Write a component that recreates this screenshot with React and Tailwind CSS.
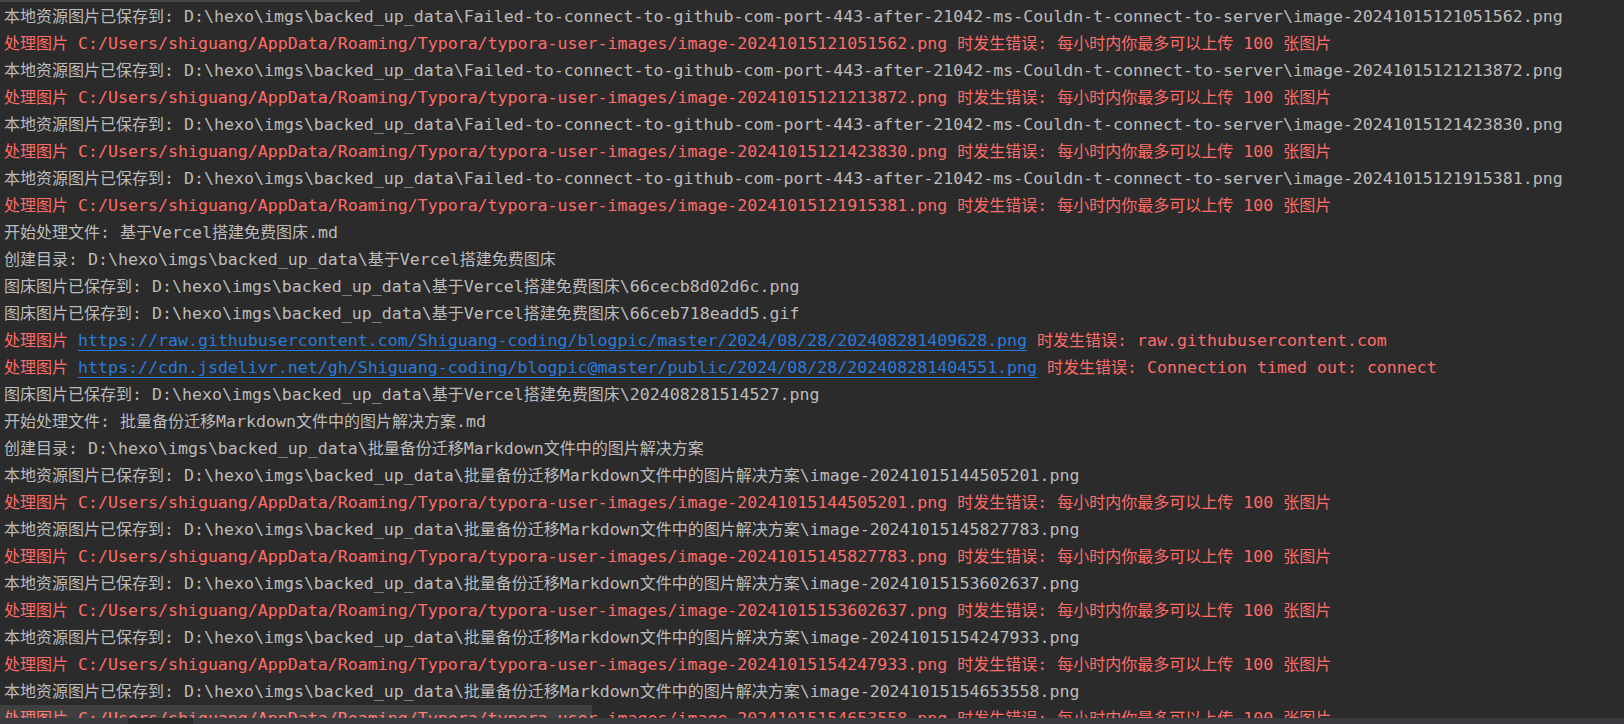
import React from "react";

const G = "gray";
const R = "red";
const L = "link";

const LOCAL_DIR_A = "Failed-to-connect-to-github-com-port-443-after-21042-ms-Couldn-t-connect-to-server";
const LOCAL_DIR_B = "批量备份迁移Markdown文件中的图片解决方案";

const savedLocal = (dir, id) => [
  [G, `本地资源图片已保存到: D:\\hexo\\imgs\\backed_up_data\\${dir}\\image-${id}.png`],
];
const uploadFail = (id) => [
  [R, `处理图片 C:/Users/shiguang/AppData/Roaming/Typora/typora-user-images/image-${id}.png 时发生错误: 每小时内你最多可以上传 100 张图片`],
];

const lines = [
  savedLocal(LOCAL_DIR_A, "20241015121051562"),
  uploadFail("20241015121051562"),
  savedLocal(LOCAL_DIR_A, "20241015121213872"),
  uploadFail("20241015121213872"),
  savedLocal(LOCAL_DIR_A, "20241015121423830"),
  uploadFail("20241015121423830"),
  savedLocal(LOCAL_DIR_A, "20241015121915381"),
  uploadFail("20241015121915381"),
  [[G, "开始处理文件: 基于Vercel搭建免费图床.md"]],
  [[G, "创建目录: D:\\hexo\\imgs\\backed_up_data\\基于Vercel搭建免费图床"]],
  [[G, "图床图片已保存到: D:\\hexo\\imgs\\backed_up_data\\基于Vercel搭建免费图床\\66cecb8d02d6c.png"]],
  [[G, "图床图片已保存到: D:\\hexo\\imgs\\backed_up_data\\基于Vercel搭建免费图床\\66ceb718eadd5.gif"]],
  [
    [R, "处理图片 "],
    [L, "https://raw.githubusercontent.com/Shiguang-coding/blogpic/master/2024/08/28/202408281409628.png"],
    [R, " 时发生错误: raw.githubusercontent.com"],
  ],
  [
    [R, "处理图片 "],
    [L, "https://cdn.jsdelivr.net/gh/Shiguang-coding/blogpic@master/public/2024/08/28/202408281404551.png"],
    [R, " 时发生错误: Connection timed out: connect"],
  ],
  [[G, "图床图片已保存到: D:\\hexo\\imgs\\backed_up_data\\基于Vercel搭建免费图床\\202408281514527.png"]],
  [[G, "开始处理文件: 批量备份迁移Markdown文件中的图片解决方案.md"]],
  [[G, "创建目录: D:\\hexo\\imgs\\backed_up_data\\批量备份迁移Markdown文件中的图片解决方案"]],
  savedLocal(LOCAL_DIR_B, "20241015144505201"),
  uploadFail("20241015144505201"),
  savedLocal(LOCAL_DIR_B, "20241015145827783"),
  uploadFail("20241015145827783"),
  savedLocal(LOCAL_DIR_B, "20241015153602637"),
  uploadFail("20241015153602637"),
  savedLocal(LOCAL_DIR_B, "20241015154247933"),
  uploadFail("20241015154247933"),
  savedLocal(LOCAL_DIR_B, "20241015154653558"),
  uploadFail("20241015154653558"),
];

const colorClass = {
  gray: "text-[#bbbbbb]",
  red: "text-[#ff6b68]",
  link: "text-[#287bde] underline decoration-[#287bde] underline-offset-[4px]",
};

function Mixed({ text }) {
  const parts = text.split(/([\u3000-\u9fff\uff00-\uffef]+)/);
  return parts.map((p, i) =>
    /[\u3000-\u9fff\uff00-\uffef]/.test(p) ? (
      <span key={i} className="text-[16px] font-['Noto_Sans_CJK_SC',sans-serif]">
        {p}
      </span>
    ) : (
      <React.Fragment key={i}>{p}</React.Fragment>
    )
  );
}

function ConsoleLine({ segments }) {
  return (
    <div className="h-[27px] whitespace-pre leading-[27px]">
      {segments.map(([c, t], i) => (
        <span key={i} className={colorClass[c]}>
          <Mixed text={t} />
        </span>
      ))}
    </div>
  );
}

export default function App() {
  return (
    <div className="relative h-[724px] w-[1624px] overflow-hidden bg-[#2b2b2b]">
      {/* leftover thumb from the panel above */}
      <div className="absolute left-0 top-0 h-[2px] w-[360px] bg-[#474747]" />

      <div className="flex flex-col pl-[4px] pt-[2px] font-['DejaVu_Sans_Mono','Noto_Sans_CJK_SC',monospace] text-[16.6px]">
        {lines.map((segs, i) => (
          <ConsoleLine key={i} segments={segs} />
        ))}
      </div>

      {/* horizontal scrollbar */}
      <div className="absolute bottom-[6px] left-0 h-[13px] w-[592px] bg-white/10" />
      <div className="absolute bottom-0 left-0 flex h-[6px] w-full">
        <div className="w-[128px] bg-[#393b3e]" />
        <div className="w-[65px] bg-[#2b2b2b]" />
        <div className="flex-1 bg-[#393b3e]" />
      </div>
    </div>
  );
}
